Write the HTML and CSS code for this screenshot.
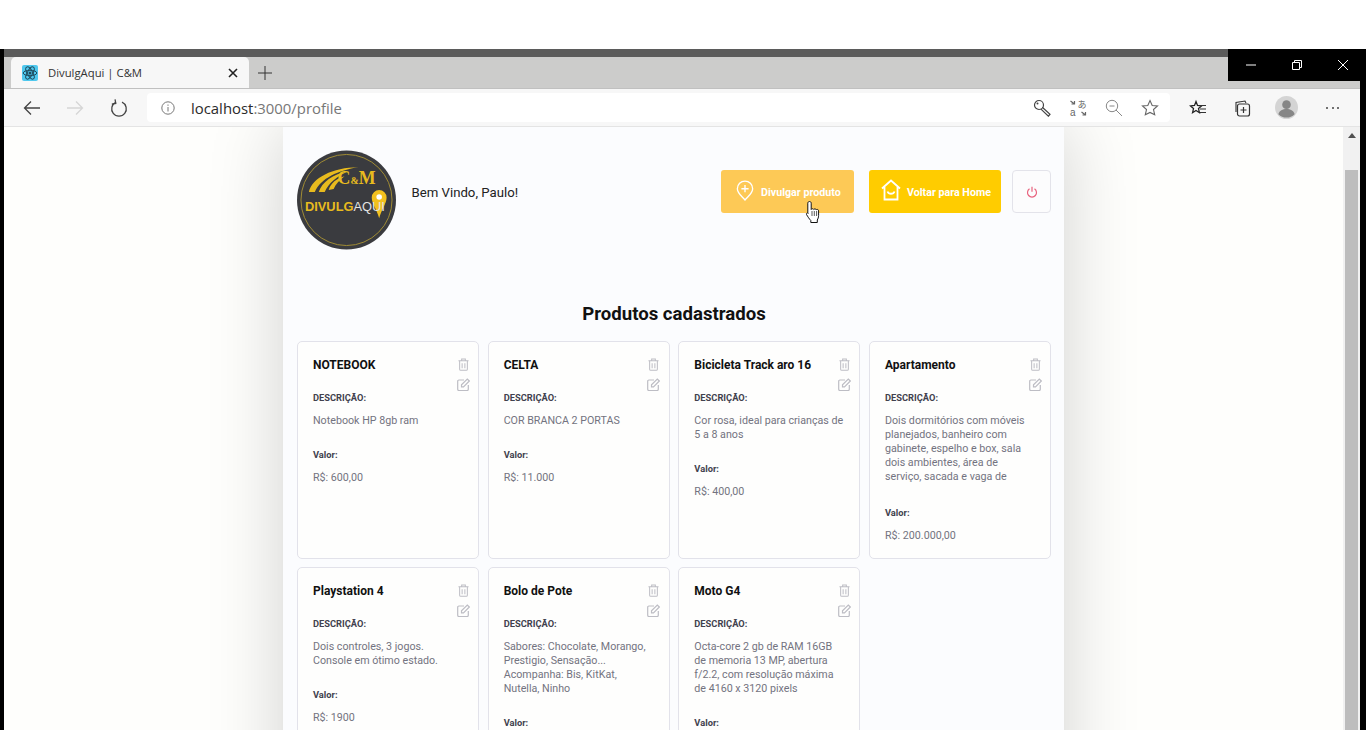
FILE: index.html
```html
<!DOCTYPE html>
<html lang="pt-BR">
<head>
<meta charset="utf-8">
<title>DivulgAqui | C&amp;M</title>
<link rel="stylesheet" href="styles.css">
</head>
<body>
<div class="window">
  <div class="title-strip"></div>
  <div class="tab-strip">
    <div class="tab">
      <svg class="favicon" viewBox="0 0 16 16"><rect width="16" height="16" rx="2" fill="#4fc8ee"/><g fill="none" stroke="#1d4a5c" stroke-width="1"><ellipse cx="8" cy="8" rx="6.8" ry="2.7"/><ellipse cx="8" cy="8" rx="6.8" ry="2.7" transform="rotate(60 8 8)"/><ellipse cx="8" cy="8" rx="6.8" ry="2.7" transform="rotate(120 8 8)"/></g><circle cx="8" cy="8" r="1.5" fill="#1d4a5c"/></svg>
      <span class="tab-title">DivulgAqui | C&amp;M</span>
      <svg class="tab-close" viewBox="0 0 10 10"><path d="M1 1l8 8M9 1l-8 8" stroke="#222" stroke-width="1.6" fill="none"/></svg>
    </div>
    <svg class="new-tab" viewBox="0 0 14 14"><path d="M7 0v14M0 7h14" stroke="#333" stroke-width="1" fill="none"/></svg>
  </div>
  <div class="win-controls">
    <svg viewBox="0 0 12 12"><path d="M1 6h10" stroke="#fff" fill="none"/></svg>
    <svg viewBox="0 0 12 12"><path d="M1.5 3.5h7v7h-7zM3.5 3.5v-2h7v7h-2" stroke="#fff" fill="none"/></svg>
    <svg viewBox="0 0 12 12"><path d="M1 1l10 10M11 1L1 11" stroke="#fff" fill="none"/></svg>
  </div>
  <div class="toolbar">
    <svg class="nav back" viewBox="0 0 18 16"><path d="M17 8H1.5M8 1.5L1.5 8 8 14.5" stroke="#444" stroke-width="1.3" fill="none"/></svg>
    <svg class="nav forward" viewBox="0 0 18 16"><path d="M1 8h15.5M10 1.5L16.5 8 10 14.5" stroke="#d6d6d6" stroke-width="1.3" fill="none"/></svg>
    <svg class="nav reload" viewBox="0 0 18 18"><path d="M6 3.2a7.3 7.3 0 1 0 6 0" stroke="#444" stroke-width="1.3" fill="none"/><path d="M5.5 0.5v4h-4" stroke="#444" stroke-width="1.3" fill="none" transform="rotate(-10 5 3)"/></svg>
    <div class="address">
      <svg class="info" viewBox="0 0 14 14"><circle cx="7" cy="7" r="6.2" stroke="#777" fill="none"/><path d="M7 6v4.5M7 3.5v1.3" stroke="#777" fill="none"/></svg>
      <span class="url"><span class="host">localhost</span>:3000/profile</span>
      <div class="address-icons">
        <svg viewBox="0 0 18 18"><circle cx="6" cy="6" r="4.5" stroke="#444" stroke-width="1.2" fill="none"/><circle cx="4.5" cy="4.500" r="1" fill="#444"/><path d="M9.300 8.200l7.700 7-1.600 2-7.700-7.300" stroke="#444" stroke-width="1.200" fill="none"/></svg>
        <svg viewBox="0 0 18 18"><path d="M1.500 2l4 3M5.500 2v3h-3M12.500 13l4 3M16.500 13v3h-3" stroke="#666" stroke-width="1.200" fill="none"/><text class="tr-a" x="1" y="16.500">a</text><text class="tr-jp" x="8.500" y="8.500">あ</text></svg>
        <svg viewBox="0 0 18 18"><circle cx="7" cy="7" r="5.7" stroke="#888" fill="none"/><path d="M4.5 7h5M11 11l6 6" stroke="#888" fill="none"/></svg>
        <svg viewBox="0 0 18 18"><path d="M9 1.5l2.2 5 5.3.5-4 3.5 1.2 5.3L9 13.4l-4.7 2.4 1.2-5.3-4-3.5 5.3-.5z" stroke="#666" stroke-width="1.1" fill="none"/></svg>
      </div>
    </div>
    <svg class="tool fav" viewBox="0 0 18 18"><path d="M7 2.500l1.500 4 4 .4-3 2.700.9 4.100L7 11.500l-3.400 2.200.9-4.100-3-2.700 4-.4z" fill="none" stroke="#222" stroke-width="1.300"/><path d="M11 6.500h6M11 10h6M11 13.500h6" stroke="#333" stroke-width="1.200"/></svg>
    <svg class="tool coll" viewBox="0 0 18 18"><path d="M3 13V3.500L12 2l1 2" stroke="#333" stroke-width="1.100" fill="none"/><rect x="4.500" y="5" width="12" height="12" rx="2" stroke="#333" stroke-width="1.200" fill="none"/><path d="M10.500 8v6M7.500 11h6" stroke="#333" stroke-width="1.200"/></svg>
    <svg class="avatar" viewBox="0 0 24 24"><circle cx="12" cy="12" r="12" fill="#d4d4d4"/><circle cx="12" cy="9" r="4.500" fill="#868686"/><path d="M3.500 19c1-4 4.500-5.500 8.500-5.500s7.500 1.500 8.500 5.500a12 12 0 0 1-17 0z" fill="#868686"/></svg>
    <div class="more"><i></i><i></i><i></i></div>
  </div>
  <div class="viewport">
    <div class="page">
      <main class="panel">
        <header class="top">
          <svg class="logo" viewBox="0 0 100 100">
            <circle cx="50" cy="50" r="50" fill="#3a3b3f"/>
            <circle cx="50" cy="50" r="46" fill="none" stroke="#a08c35" stroke-width="1"/>
            <g fill="#e8bb1e">
              <path d="M12 42C15 28 36 17 62 17C42 20 24 28 18 42z"/>
              <path d="M22 42C25 32 36 24 52 21C40 26 32 33 28 42z"/>
              <path d="M32 40C34 33 40 28 48 26C43 30 39 34 37 39z"/>
            </g>
            <text class="logo-cm" x="41" y="34">C<tspan class="logo-amp">&amp;</tspan>M</text>
            <path d="M83 40a7.500 7.500 0 0 1 7.500 7.500c0 6-5 12-7.500 21-2.500-9-7.500-15-7.500-21A7.500 7.500 0 0 1 83 40z" fill="#f2c01e"/>
            <circle cx="83" cy="47" r="2.800" fill="#fff"/>
            <text class="logo-word" x="8" y="61"><tspan fill="#e8bb1e">DIVULG</tspan><tspan fill="#e4e4e4" class="logo-light">AQUI</tspan></text>
          </svg>
          <p class="greeting">Bem Vindo, Paulo!</p>
          <div class="actions">
            <a class="btn btn-hover">
              <svg viewBox="0 0 20 24"><path d="M10 1.500a8.500 8.500 0 0 1 8.500 8.500c0 5-4.500 8-8.500 12.500C6 18 1.500 15 1.500 10A8.500 8.500 0 0 1 10 1.500z" stroke="#fff" stroke-width="1.500" fill="none"/><path d="M10 6v8M6 10h8" stroke="#fff" stroke-width="1.500"/></svg>
              <span>Divulgar produto</span>
            </a>
            <a class="btn btn-home">
              <svg viewBox="0 0 20 22"><path d="M1 9.500L10 1.500l9 8M3.500 8v12.500h13V8" stroke="#fff" stroke-width="1.800" fill="none"/><path d="M6.500 12.500c1 3 6 3 7 0" stroke="#fff" stroke-width="1.800" fill="none"/></svg>
              <span>Voltar para Home</span>
            </a>
            <button class="power" type="button">
              <svg viewBox="0 0 12 12"><path d="M3.500 2.800a4.500 4.500 0 1 0 5 0M6 .8v5" stroke="#e8637f" stroke-width="1.200" fill="none"/></svg>
            </button>
          </div>
        </header>
        <h1 class="heading">Produtos cadastrados</h1>
        <ul class="grid">
          <li class="card">
            <div class="card-tools"><svg viewBox="0 0 12 14"><use href="#trash"/></svg><svg viewBox="0 0 13 13"><use href="#edit"/></svg></div>
            <strong class="name">NOTEBOOK</strong>
            <strong class="label">DESCRIÇÃO:</strong>
            <p class="text">Notebook HP 8gb ram</p>
            <strong class="label">Valor:</strong>
            <p class="text">R$: 600,00</p>
          </li>
          <li class="card">
            <div class="card-tools"><svg viewBox="0 0 12 14"><use href="#trash"/></svg><svg viewBox="0 0 13 13"><use href="#edit"/></svg></div>
            <strong class="name">CELTA</strong>
            <strong class="label">DESCRIÇÃO:</strong>
            <p class="text">COR BRANCA 2 PORTAS</p>
            <strong class="label">Valor:</strong>
            <p class="text">R$: 11.000</p>
          </li>
          <li class="card">
            <div class="card-tools"><svg viewBox="0 0 12 14"><use href="#trash"/></svg><svg viewBox="0 0 13 13"><use href="#edit"/></svg></div>
            <strong class="name">Bicicleta Track aro 16</strong>
            <strong class="label">DESCRIÇÃO:</strong>
            <p class="text">Cor rosa, ideal para crianças de 5 a 8 anos</p>
            <strong class="label">Valor:</strong>
            <p class="text">R$: 400,00</p>
          </li>
          <li class="card">
            <div class="card-tools"><svg viewBox="0 0 12 14"><use href="#trash"/></svg><svg viewBox="0 0 13 13"><use href="#edit"/></svg></div>
            <strong class="name">Apartamento</strong>
            <strong class="label">DESCRIÇÃO:</strong>
            <p class="text text-clamped">Dois dormitórios com móveis planejados, banheiro com gabinete, espelho e box, sala dois ambientes, área de serviço, sacada e vaga de</p>
            <strong class="label">Valor:</strong>
            <p class="text">R$: 200.000,00</p>
          </li>
          <li class="card">
            <div class="card-tools"><svg viewBox="0 0 12 14"><use href="#trash"/></svg><svg viewBox="0 0 13 13"><use href="#edit"/></svg></div>
            <strong class="name">Playstation 4</strong>
            <strong class="label">DESCRIÇÃO:</strong>
            <p class="text">Dois controles, 3 jogos. Console em ótimo estado.</p>
            <strong class="label">Valor:</strong>
            <p class="text">R$: 1900</p>
          </li>
          <li class="card">
            <div class="card-tools"><svg viewBox="0 0 12 14"><use href="#trash"/></svg><svg viewBox="0 0 13 13"><use href="#edit"/></svg></div>
            <strong class="name">Bolo de Pote</strong>
            <strong class="label">DESCRIÇÃO:</strong>
            <p class="text">Sabores: Chocolate, Morango, Prestigio, Sensação... Acompanha: Bis, KitKat, Nutella, Ninho</p>
            <strong class="label">Valor:</strong>
          </li>
          <li class="card">
            <div class="card-tools"><svg viewBox="0 0 12 14"><use href="#trash"/></svg><svg viewBox="0 0 13 13"><use href="#edit"/></svg></div>
            <strong class="name">Moto G4</strong>
            <strong class="label">DESCRIÇÃO:</strong>
            <p class="text">Octa-core 2 gb de RAM 16GB de memoria 13 MP, abertura f/2.2, com resolução máxima de 4160 x 3120 pixels</p>
            <strong class="label">Valor:</strong>
          </li>
        </ul>
      </main>
    </div>
    <div class="scrollbar">
      <span class="arrow"></span>
      <span class="thumb"></span>
    </div>
  </div>
  <svg class="cursor" viewBox="0 0 16 24"><path d="M4.500 1.500c1 0 1.700.7 1.700 1.700v6.300c.4-1 2.300-1 2.600 0 .4-.9 2.200-.8 2.500.3.500-.7 2.200-.5 2.300 1v4.700c0 2-.6 3-1.300 4.500v2.500H5.800v-2c-1.500-1.500-3-3.800-4.300-6-.6-1.100.9-2.100 1.800-1.200l-.5-.8V3.200c0-1 .7-1.700 1.700-1.700z" fill="#fff" stroke="#111" stroke-width="1"/><path d="M7 11v5M9.300 11v5M11.600 11v5" stroke="#111" stroke-width=".7"/></svg>
</div>
<svg class="defs" aria-hidden="true">
  <defs>
    <g id="trash" fill="none" stroke="#bdbdc4" stroke-width="1.100"><path d="M.5 2.800h11M4 2.800V1h4v1.800M1.800 2.800v9.400c0 .7.500 1.200 1.200 1.200h6c.7 0 1.200-.5 1.200-1.200V2.800M4.500 5.500v5.500M7.500 5.500v5.500"/></g>
    <g id="edit" fill="none" stroke="#bdbdc4" stroke-width="1.200"><path d="M7 2H2C1.200 2 .7 2.500 .7 3.300v7.900c0 .8.500 1.300 1.300 1.300h8c.8 0 1.300-.5 1.300-1.300V7"/><path d="M4.500 6.800v2h2L12.300 3l-2-2z"/></g>
  </defs>
</svg>
</body>
</html>
```
FILE: styles.css
```css
* { box-sizing: border-box; }
html, body { margin: 0; height: 736px; overflow: hidden; background: #fff; }
.defs { position: absolute; width: 0; height: 0; }
.window {
  position: relative;
  margin: 49px 1px 0 0;
  height: 681px;
  padding: 0 6px 0 4px;
  background: #000;
  display: flex;
  flex-direction: column;
  overflow: hidden;
  font-family: "Open Sans", "Noto Sans", sans-serif;
}
.title-strip { height: 8px; background: #5b5b5b; flex: none; }
.tab-strip {
  height: 32px;
  flex: none;
  background: #cccccb;
  border-bottom: 1px solid #c0c0c0;
  display: flex;
  align-items: flex-start;
  padding-left: 7px;
}
.tab {
  width: 238px;
  height: 31px;
  background: #f7f7f7;
  border-radius: 5px 5px 0 0;
  display: flex;
  align-items: center;
  padding: 0 11px;
}
.favicon { width: 16px; height: 16px; flex: none; }
.tab-title { margin-left: 10px; font-size: 11.300px; color: #333; flex: 1; }
.tab-close { width: 10px; height: 10px; flex: none; }
.new-tab { width: 14px; height: 14px; margin: 9px 0 0 9px; flex: none; }
.win-controls {
  position: absolute;
  top: 0;
  right: 0;
  width: 138px;
  height: 32px;
  background: #000;
  display: flex;
  align-items: center;
  gap: 34px;
  padding-left: 17px;
}
.win-controls svg { width: 12px; height: 12px; flex: none; }
.toolbar {
  height: 38px;
  flex: none;
  background: #f7f7f7;
  border-bottom: 1px solid #e4e4e4;
  display: flex;
  align-items: center;
  position: relative;
}
.nav { flex: none; }
.back { width: 18px; height: 16px; margin-left: 19px; }
.forward { width: 18px; height: 16px; margin-left: 25px; }
.reload { width: 18px; height: 18px; margin-left: 26px; }
.address {
  margin-left: 19px;
  width: 1023px;
  height: 29px;
  background: #fff;
  border-radius: 4px;
  display: flex;
  align-items: center;
  padding-left: 14px;
  flex: none;
}
.info { width: 14px; height: 14px; flex: none; }
.url { margin-left: 16px; font-size: 14.900px; color: #777; }
.host { color: #2b2b2b; }
.address-icons { margin-left: auto; display: flex; gap: 18px; padding-right: 11px; }
.address-icons svg { width: 18px; height: 18px; }
.tr-a { font: 10px "Liberation Sans", sans-serif; fill: #666; }
.tr-jp { font: 9px "Noto Sans CJK JP", sans-serif; fill: #666; }
.tool { width: 18px; height: 18px; flex: none; }
.fav { margin-left: 19px; }
.coll { margin-left: 26px; }
.avatar { width: 23px; height: 23px; margin-left: 24px; flex: none; }
.more { display: flex; gap: 3.500px; margin-left: 28px; }
.more i { width: 2px; height: 2px; background: #444; border-radius: 50%; display: block; }
.viewport { flex: 1; min-height: 0; display: flex; background: #fefefc; }
.page { flex: 1; min-width: 0; overflow: hidden; }
.panel {
  width: 781px;
  margin: 0 auto;
  height: 900px;
  padding: 23px 13px 0 14px;
  background: #fbfcfe;
  box-shadow: 0 0 70px rgba(0, 0, 0, 0.18);
  font-family: Roboto, "Liberation Sans", sans-serif;
}
.top { display: flex; align-items: center; }
.logo { width: 99px; height: 100px; flex: none; }
.logo-cm { font: 700 18px "Liberation Serif", serif; fill: #e8bb1e; }
.logo-amp { font-size: 10px; }
.logo-word { font: 700 13px "Liberation Sans", sans-serif; }
.logo-light { font-weight: 400; }
.greeting { margin: 0 0 16px 15.500px; font-size: 13.200px; color: #222; }
.actions { margin: 0 0 17px auto; display: flex; align-items: center; }
.btn {
  height: 43px;
  width: 133px;
  border-radius: 3px;
  color: #fff;
  font-size: 10.700px;
  font-weight: 700;
  display: flex;
  align-items: center;
}
.btn span { margin-top: 1px; }
.btn-hover { background: #fdc956; padding-left: 15px; gap: 7px; }
.btn-hover svg { width: 18px; height: 23px; flex: none; margin-top: -3px; }
.btn-home { background: #ffcc00; margin-left: 15px; width: 132px; padding-left: 12px; gap: 6px; }
.btn-home svg { width: 20px; height: 22px; flex: none; margin-top: -3px; }
.power {
  margin-left: 11px;
  width: 39px;
  height: 43px;
  background: #fcfcfd;
  border: 1px solid #e3e3ea;
  border-radius: 4px;
  display: flex;
  align-items: center;
  justify-content: center;
  padding: 0;
}
.power svg { width: 12px; height: 12px; }
.heading { margin: 54px 0 16px; text-align: center; font-size: 18.600px; line-height: 21px; font-weight: 700; color: #111; }
.grid {
  list-style: none;
  margin: 0;
  padding: 0;
  display: grid;
  grid-template-columns: repeat(4, 1fr);
  grid-auto-rows: 218px;
  column-gap: 8.670px;
  row-gap: 8px;
}
.card {
  position: relative;
  background: #fefefd;
  border: 1px solid #e2e2ea;
  border-radius: 5px;
  padding: 15px 15px 14px;
  overflow: hidden;
}
.card-tools { position: absolute; top: 16px; right: 8.500px; display: flex; flex-direction: column; align-items: flex-end; gap: 7px; }
.card-tools svg:first-child { width: 11px; height: 13px; margin-right: 1px; }
.card-tools svg:last-child { width: 13px; height: 13px; }
.name { display: block; font-size: 12px; line-height: 16px; color: #111; margin-bottom: 19px; }
.label { display: block; font-size: 9.300px; line-height: 12px; color: #41414d; margin-bottom: 10px; }
.text { margin: 0 0 21px; font-size: 10.700px; line-height: 14px; color: #737380; }
.text-clamped { margin-bottom: 23px; }
.scrollbar {
  width: 17px;
  flex: none;
  background: #f1f1f1;
  display: flex;
  flex-direction: column;
  align-items: center;
  position: relative;
}
.arrow {
  margin-top: 6px;
  width: 0;
  height: 0;
  border-left: 4px solid transparent;
  border-right: 4px solid transparent;
  border-bottom: 5px solid #505050;
}
.thumb { margin-top: 32px; width: 13px; flex: 1; background: #bdbdbd; }
.cursor { position: absolute; left: 805px; top: 151px; width: 16px; height: 24px; }
```
